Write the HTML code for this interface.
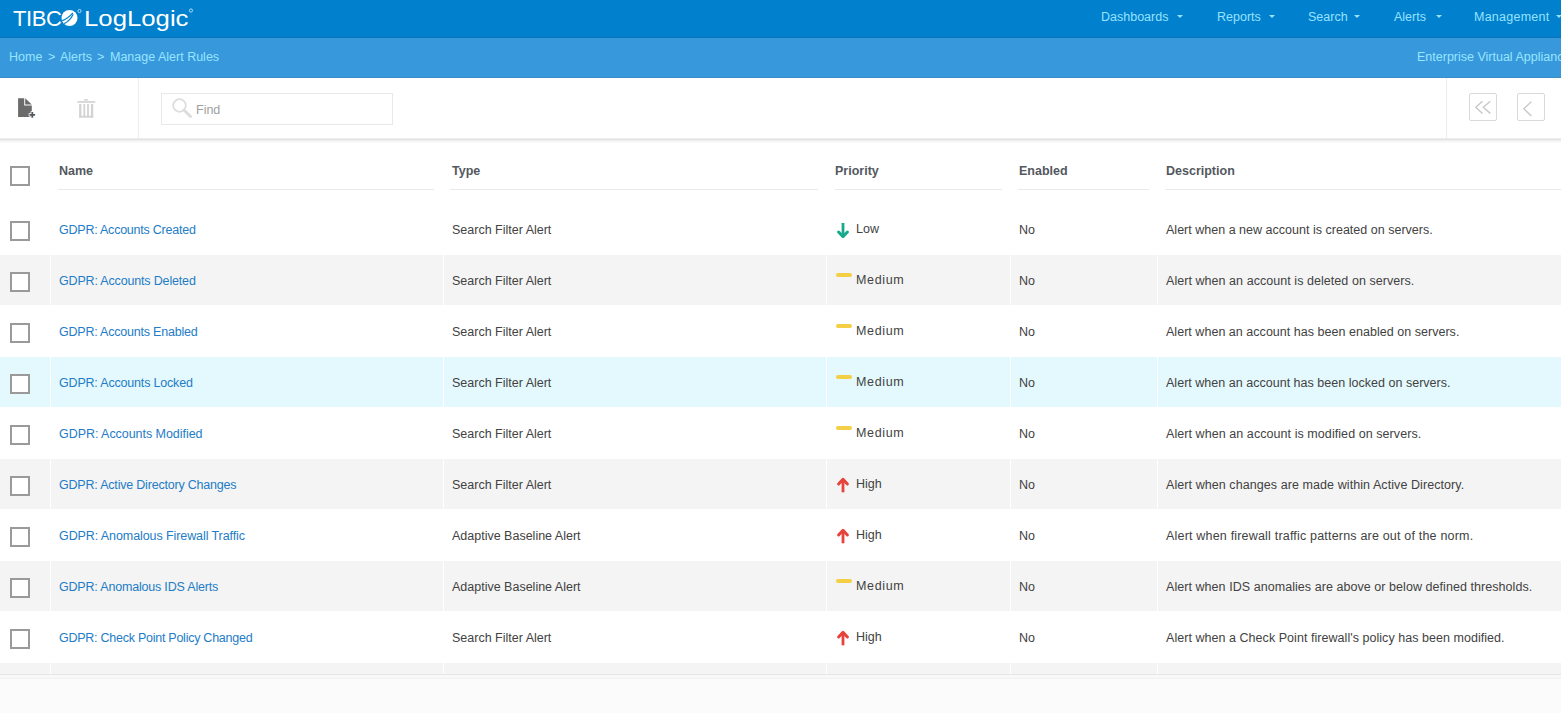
<!DOCTYPE html>
<html>
<head>
<meta charset="utf-8">
<style>
*{box-sizing:border-box;margin:0;padding:0}
html,body{width:1561px;height:713px;overflow:hidden;background:#fbfbfb;font-family:"Liberation Sans",sans-serif;font-size:12.5px}
.abs{position:absolute}
#top{position:absolute;left:0;top:0;width:1561px;height:38px;background:linear-gradient(#0080cd 0,#0080cd 36px,#047bc6 36px,#047bc6 37px,#0875bd 37px)}
#crumb{position:absolute;left:0;top:38px;width:1561px;height:40px;background:#3798dc;border-bottom:1px solid #3a8bc6}
.nav{position:absolute;top:9px;line-height:16px;color:#97e3ff;white-space:nowrap}
.caret{position:absolute;top:15px;width:0;height:0;border-left:3px solid transparent;border-right:3px solid transparent;border-top:3px solid #97e3ff}
.bc{position:absolute;top:49px;line-height:16px;color:#97e6ff;white-space:nowrap}
#tool{position:absolute;left:0;top:78px;width:1561px;height:60px;background:#fff}
#shadow{position:absolute;left:0;top:138px;width:1561px;height:5px;background:linear-gradient(#ececec 0px,#ececec 1px,#e3e3e3 1px,#e3e3e3 2px,#efefef 2px,#efefef 3px,#f5f5f5 3px,#f5f5f5 4px,#fafafa 4px)}
#tablebg{position:absolute;left:0;top:143px;width:1561px;height:531px;background:#fff}
.row{position:absolute;left:0;width:1561px;height:50px}
.grey{background:#f4f4f4}
.cyan{background:#e4f9fd}
.sep{position:absolute;top:0;width:1px;height:50px;background:#fff}
.cell{position:absolute;top:1px;line-height:50px;white-space:nowrap;color:#424242}
.link{color:#237cc6}
.cb{position:absolute;left:10px;top:17px;width:20px;height:20px;border:2px solid #9a9a9a;background:#fff}
.hd{position:absolute;top:163px;line-height:16px;font-weight:bold;color:#53585e;white-space:nowrap}
.hl{position:absolute;top:189px;height:1px;background:#eaeaea}
</style>
</head>
<body>
<div id="top"></div>
<!-- logo -->
<div class="abs" style="left:13px;top:7px;font-size:22px;line-height:24px;color:#fff;white-space:nowrap;letter-spacing:-0.4px">TIBC</div>
<svg class="abs" style="left:60px;top:8px" width="22" height="20" viewBox="0 0 22 20">
  <circle cx="9.5" cy="10" r="8" fill="#fff"/>
  <path d="M2.2 12.6 Q8 10.5 12.9 4.8" stroke="#0080cd" stroke-width="1.2" fill="none"/>
  <path d="M4.2 15.6 Q10 12.8 13.2 6.2" stroke="#0080cd" stroke-width="1.2" fill="none"/>
  <circle cx="19.5" cy="3" r="1.6" fill="none" stroke="#cfefff" stroke-width="0.8"/>
</svg>
<div class="abs" style="left:84px;top:7px;font-size:22px;line-height:24px;color:#fff;white-space:nowrap;transform-origin:0 0;transform:scaleX(1.17)">LogLogic</div>
<svg class="abs" style="left:187px;top:7px" width="8" height="8"><circle cx="4" cy="3.5" r="1.6" fill="none" stroke="#cfefff" stroke-width="0.8"/></svg>

<div class="nav" style="left:1101px">Dashboards</div><div class="caret" style="left:1177px"></div>
<div class="nav" style="left:1217px">Reports</div><div class="caret" style="left:1269px"></div>
<div class="nav" style="left:1308px">Search</div><div class="caret" style="left:1354px"></div>
<div class="nav" style="left:1394px">Alerts</div><div class="caret" style="left:1436px"></div>
<div class="nav" style="left:1474px;letter-spacing:0.25px">Management</div><div class="caret" style="left:1556px"></div>

<div id="crumb"></div>
<div class="bc" style="left:9px">Home</div>
<div class="bc" style="left:48px">&gt;</div>
<div class="bc" style="left:60px">Alerts</div>
<div class="bc" style="left:97px">&gt;</div>
<div class="bc" style="left:110px">Manage Alert Rules</div>
<div class="bc" style="left:1417px">Enterprise Virtual Appliance</div>

<div id="tool"></div>
<div id="shadow"></div>
<div class="abs" style="left:138px;top:78px;width:1px;height:60px;background:#ececec"></div>
<div class="abs" style="left:1446px;top:78px;width:1px;height:60px;background:#ececec"></div>
<!-- new doc icon -->
<svg class="abs" style="left:16px;top:96px" width="22" height="24" viewBox="0 0 22 24">
  <path d="M2.1 2.2 H8.2 V9.6 H15.8 V21 H2.1 Z" fill="#6b6b6b"/>
  <path d="M9.2 2.2 L15.8 8.6 H9.2 Z" fill="#6b6b6b"/>
  <path d="M16.3 15.3 V22.5 M12.7 18.9 H19.9" stroke="#fff" stroke-width="3.4"/>
  <path d="M16.3 16.1 V21.7 M13.5 18.9 H19.1" stroke="#505860" stroke-width="1.8"/>
</svg>
<!-- trash icon -->
<svg class="abs" style="left:76px;top:97px" width="22" height="22" viewBox="0 0 22 22" fill="#d3d3d3">
  <path d="M8.3 2.1 H11.6 L12.1 3.6 H7.8 Z"/>
  <rect x="1.5" y="4.1" width="17.7" height="1.7"/>
  <rect x="3.1" y="7" width="2.3" height="13.6"/>
  <rect x="7.4" y="7" width="1.8" height="13.6"/>
  <rect x="11.1" y="7" width="1.8" height="13.6"/>
  <rect x="14.9" y="7" width="2.3" height="13.6"/>
  <rect x="3.1" y="18.8" width="14.1" height="1.8"/>
</svg>
<!-- find box -->
<div class="abs" style="left:161px;top:93px;width:232px;height:32px;border:1px solid #e8e8e8;background:#fff"></div>
<svg class="abs" style="left:170px;top:96px" width="24" height="24" viewBox="0 0 24 24">
  <circle cx="9.5" cy="9.5" r="6.3" fill="none" stroke="#dddddd" stroke-width="1.8"/>
  <path d="M14 14 L20.5 20.5" stroke="#dddddd" stroke-width="3" stroke-linecap="round"/>
</svg>
<div class="abs" style="left:196px;top:102px;line-height:16px;color:#9f9f9f;white-space:nowrap">Find</div>
<!-- pager -->
<div class="abs" style="left:1469px;top:93px;width:28px;height:28px;border:1px solid #d9d9d9;border-radius:2px;background:#fff"></div>
<svg class="abs" style="left:1469px;top:93px" width="28" height="28" viewBox="0 0 28 28">
  <path d="M13.5 8.2 L6.8 14.3 L13.5 20.4 M21.3 8.2 L14.3 14.3 L21.3 20.4" stroke="#c8c8c8" stroke-width="1.4" fill="none"/>
</svg>
<div class="abs" style="left:1517px;top:93px;width:28px;height:28px;border:1px solid #d9d9d9;border-radius:2px;background:#fff"></div>
<svg class="abs" style="left:1517px;top:93px" width="28" height="28" viewBox="0 0 28 28">
  <path d="M14.3 8.7 L6.8 15.8 L14.3 22.9" stroke="#c8c8c8" stroke-width="1.4" fill="none"/>
</svg>
<div id="tablebg"></div>
<!--ROWS--><div class="cb" style="top:166px"></div>
<div class="hd" style="left:59px">Name</div>
<div class="hl" style="left:58px;width:376px"></div>
<div class="hd" style="left:452px">Type</div>
<div class="hl" style="left:450px;width:368px"></div>
<div class="hd" style="left:835px">Priority</div>
<div class="hl" style="left:835px;width:167px"></div>
<div class="hd" style="left:1019px">Enabled</div>
<div class="hl" style="left:1018px;width:131px"></div>
<div class="hd" style="left:1166px">Description</div>
<div class="hl" style="left:1165px;width:396px"></div>
<div class="row" style="top:204px"><div class="cb"></div><div class="cell link" style="left:59px;letter-spacing:-0.229px">GDPR: Accounts Created</div><div class="cell" style="left:452px">Search Filter Alert</div><svg class="abs" style="left:836px;top:18px" width="14" height="16" viewBox="0 0 14 16"><path d="M7 1 V14" stroke="#19a98b" stroke-width="2.8" fill="none"/><path d="M2.6 10 L7 14.6 L11.4 10" stroke="#19a98b" stroke-width="3" fill="none" stroke-linecap="round" stroke-linejoin="round"/></svg><div class="cell" style="left:856px;top:0px;letter-spacing:0px">Low</div><div class="cell" style="left:1019px">No</div><div class="cell" style="left:1166px;letter-spacing:0.013px">Alert when a new account is created on servers.</div></div>
<div class="row grey" style="top:255px"><div class="sep" style="left:50px"></div><div class="sep" style="left:443px"></div><div class="sep" style="left:826px"></div><div class="sep" style="left:1010px"></div><div class="sep" style="left:1157px"></div><div class="cb"></div><div class="cell link" style="left:59px;letter-spacing:-0.167px">GDPR: Accounts Deleted</div><div class="cell" style="left:452px">Search Filter Alert</div><div class="abs" style="left:836px;top:18px;width:16px;height:4px;border-radius:2px;background:#f3cf45"></div><div class="cell" style="left:856px;top:0px;letter-spacing:0.64px">Medium</div><div class="cell" style="left:1019px">No</div><div class="cell" style="left:1166px;letter-spacing:0.053px">Alert when an account is deleted on servers.</div></div>
<div class="row" style="top:306px"><div class="cb"></div><div class="cell link" style="left:59px;letter-spacing:-0.214px">GDPR: Accounts Enabled</div><div class="cell" style="left:452px">Search Filter Alert</div><div class="abs" style="left:836px;top:18px;width:16px;height:4px;border-radius:2px;background:#f3cf45"></div><div class="cell" style="left:856px;top:0px;letter-spacing:0.64px">Medium</div><div class="cell" style="left:1019px">No</div><div class="cell" style="left:1166px;letter-spacing:0.031px">Alert when an account has been enabled on servers.</div></div>
<div class="row cyan" style="top:357px"><div class="sep" style="left:50px"></div><div class="sep" style="left:443px"></div><div class="sep" style="left:826px"></div><div class="sep" style="left:1010px"></div><div class="sep" style="left:1157px"></div><div class="cb"></div><div class="cell link" style="left:59px;letter-spacing:-0.185px">GDPR: Accounts Locked</div><div class="cell" style="left:452px">Search Filter Alert</div><div class="abs" style="left:836px;top:18px;width:16px;height:4px;border-radius:2px;background:#f3cf45"></div><div class="cell" style="left:856px;top:0px;letter-spacing:0.64px">Medium</div><div class="cell" style="left:1019px">No</div><div class="cell" style="left:1166px;letter-spacing:0.021px">Alert when an account has been locked on servers.</div></div>
<div class="row" style="top:408px"><div class="cb"></div><div class="cell link" style="left:59px;letter-spacing:-0.045px">GDPR: Accounts Modified</div><div class="cell" style="left:452px">Search Filter Alert</div><div class="abs" style="left:836px;top:18px;width:16px;height:4px;border-radius:2px;background:#f3cf45"></div><div class="cell" style="left:856px;top:0px;letter-spacing:0.64px">Medium</div><div class="cell" style="left:1019px">No</div><div class="cell" style="left:1166px;letter-spacing:0.068px">Alert when an account is modified on servers.</div></div>
<div class="row grey" style="top:459px"><div class="sep" style="left:50px"></div><div class="sep" style="left:443px"></div><div class="sep" style="left:826px"></div><div class="sep" style="left:1010px"></div><div class="sep" style="left:1157px"></div><div class="cb"></div><div class="cell link" style="left:59px;letter-spacing:-0.2px">GDPR: Active Directory Changes</div><div class="cell" style="left:452px">Search Filter Alert</div><svg class="abs" style="left:836px;top:18px" width="14" height="16" viewBox="0 0 14 16"><path d="M7 15.3 V3" stroke="#e5433c" stroke-width="2.8" fill="none"/><path d="M2.6 7 L7 2.4 L11.4 7" stroke="#e5433c" stroke-width="3" fill="none" stroke-linecap="round" stroke-linejoin="round"/></svg><div class="cell" style="left:856px;top:0px;letter-spacing:0px">High</div><div class="cell" style="left:1019px">No</div><div class="cell" style="left:1166px;letter-spacing:0.076px">Alert when changes are made within Active Directory.</div></div>
<div class="row" style="top:510px"><div class="cb"></div><div class="cell link" style="left:59px;letter-spacing:-0.087px">GDPR: Anomalous Firewall Traffic</div><div class="cell" style="left:452px">Adaptive Baseline Alert</div><svg class="abs" style="left:836px;top:18px" width="14" height="16" viewBox="0 0 14 16"><path d="M7 15.3 V3" stroke="#e5433c" stroke-width="2.8" fill="none"/><path d="M2.6 7 L7 2.4 L11.4 7" stroke="#e5433c" stroke-width="3" fill="none" stroke-linecap="round" stroke-linejoin="round"/></svg><div class="cell" style="left:856px;top:0px;letter-spacing:0px">High</div><div class="cell" style="left:1019px">No</div><div class="cell" style="left:1166px;letter-spacing:0.191px">Alert when firewall traffic patterns are out of the norm.</div></div>
<div class="row grey" style="top:561px"><div class="sep" style="left:50px"></div><div class="sep" style="left:443px"></div><div class="sep" style="left:826px"></div><div class="sep" style="left:1010px"></div><div class="sep" style="left:1157px"></div><div class="cb"></div><div class="cell link" style="left:59px;letter-spacing:-0.188px">GDPR: Anomalous IDS Alerts</div><div class="cell" style="left:452px">Adaptive Baseline Alert</div><div class="abs" style="left:836px;top:18px;width:16px;height:4px;border-radius:2px;background:#f3cf45"></div><div class="cell" style="left:856px;top:0px;letter-spacing:0.64px">Medium</div><div class="cell" style="left:1019px">No</div><div class="cell" style="left:1166px;letter-spacing:0.056px">Alert when IDS anomalies are above or below defined thresholds.</div></div>
<div class="row" style="top:612px"><div class="cb"></div><div class="cell link" style="left:59px;letter-spacing:-0.255px">GDPR: Check Point Policy Changed</div><div class="cell" style="left:452px">Search Filter Alert</div><svg class="abs" style="left:836px;top:18px" width="14" height="16" viewBox="0 0 14 16"><path d="M7 15.3 V3" stroke="#e5433c" stroke-width="2.8" fill="none"/><path d="M2.6 7 L7 2.4 L11.4 7" stroke="#e5433c" stroke-width="3" fill="none" stroke-linecap="round" stroke-linejoin="round"/></svg><div class="cell" style="left:856px;top:0px;letter-spacing:0px">High</div><div class="cell" style="left:1019px">No</div><div class="cell" style="left:1166px;letter-spacing:0.045px">Alert when a Check Point firewall's policy has been modified.</div></div>
<div class="row grey" style="top:663px;height:11px"><div class="sep" style="left:50px;height:11px"></div><div class="sep" style="left:443px;height:11px"></div><div class="sep" style="left:826px;height:11px"></div><div class="sep" style="left:1010px;height:11px"></div><div class="sep" style="left:1157px;height:11px"></div></div>
<div class="abs" style="left:0;top:674px;width:1561px;height:1px;background:#e6e6e6"></div>
<div class="abs" style="left:0;top:675px;width:1561px;height:3px;background:#f8f8f8"></div>
<div class="abs" style="left:0;top:678px;width:1561px;height:1px;background:#f1f1f1"></div><!--/ROWS-->
</body>
</html>
